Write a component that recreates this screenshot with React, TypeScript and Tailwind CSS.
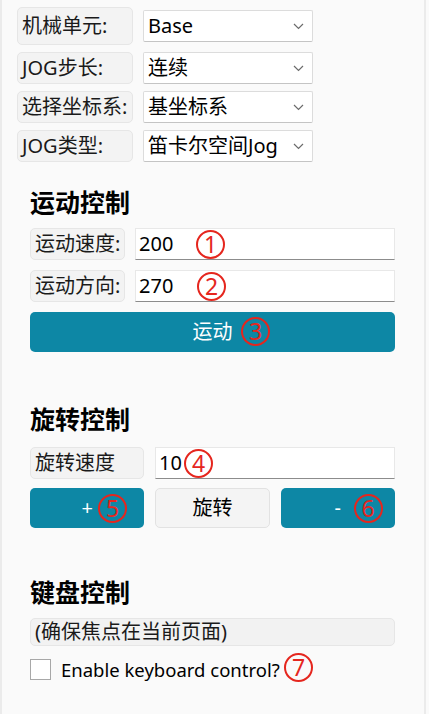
import React from "react";

const font = "font-['Noto_Sans','Noto_Sans_CJK_SC',sans-serif]";

// 红色圆圈序号标注
function Mark({ n, className }: { n: number; className: string }) {
  return (
    <span
      className={`absolute flex h-[29px] w-[29px] items-center justify-center rounded-full border-2 border-[#e5261e] text-[23px] leading-none text-[#e5261e] ${className}`}
    >
      {n}
    </span>
  );
}

function Chevron() {
  return (
    <svg width="11" height="7" viewBox="0 0 11 7" fill="none" className="ml-auto shrink-0">
      <path d="M1 1l4.5 4.5L10 1" stroke="#6b6b6b" strokeWidth="1.2" />
    </svg>
  );
}

const selects = [
  { label: "机械单元:", value: "Base", tall: true },
  { label: "JOG步长:", value: "连续" },
  { label: "选择坐标系:", value: "基坐标系" },
  { label: "JOG类型:", value: "笛卡尔空间Jog" },
];

function Label({ text, w, h = "h-[32px]" }: { text: string; w: string; h?: string }) {
  return (
    <div
      className={`${w} ${h} flex shrink-0 items-center whitespace-nowrap rounded-[5px] border border-[#e6e6e6] bg-[#f3f3f3] pl-[4px] text-[20px] text-[#1a1a1a]`}
    >
      {text}
    </div>
  );
}

function Input({ value, w, mark }: { value: string; w: string; mark: React.ReactNode }) {
  return (
    <div
      className={`relative ${w} flex h-[32px] shrink-0 items-center border border-[#e8e8e8] border-b-[#8c8c8c] bg-white pl-[3px] text-[20px] text-black`}
    >
      {value}
      {mark}
    </div>
  );
}

export default function App() {
  return (
    <div className={`min-h-[714px] w-[429px] bg-[#fafafa] ${font}`}>
      <div className="min-h-[714px] w-[426px] border-l-2 border-r-2 border-[#ebebeb]">
        {/* 顶部下拉选项 */}
        <div className="flex flex-col gap-[7px] pl-[15px] pt-[7px]">
          {selects.map((s) => (
            <div key={s.label} className="flex items-center gap-[10px]">
              <Label text={s.label} w="w-[116px]" h={s.tall ? "h-[38px]" : "h-[32px]"} />
              <div className="flex h-[32px] w-[170px] items-center whitespace-nowrap rounded-[2px] border border-[#dcdcdc] border-b-[#c4c4c4] bg-white pl-[4px] pr-[8px] text-[20px] text-black">
                <span>{s.value}</span>
                <Chevron />
              </div>
            </div>
          ))}
        </div>

        {/* 运动控制 */}
        <div className="mt-[24px] w-[393px] pl-[28px]">
          <div className="h-[32px] text-[25px] font-bold leading-[32px] text-black">运动控制</div>
          <div className="mt-[10px] flex flex-col gap-[10px]">
            <div className="flex items-center gap-[10px]">
              <Label text="运动速度:" w="w-[95px]" />
              <Input value="200" w="w-[260px]" mark={<Mark n={1} className="left-[60px] top-[1px]" />} />
            </div>
            <div className="flex items-center gap-[10px]">
              <Label text="运动方向:" w="w-[95px]" />
              <Input value="270" w="w-[260px]" mark={<Mark n={2} className="left-[61px] top-[1px]" />} />
            </div>
          </div>
          <button className="relative mt-[10px] flex h-[40px] w-[365px] items-center justify-center rounded-[5px] bg-[#0d87a5] text-[20px] text-white">
            运动
            <Mark n={3} className="left-[211px] top-[5px]" />
          </button>
        </div>

        {/* 旋转控制 */}
        <div className="mt-[51px] w-[393px] pl-[28px]">
          <div className="h-[32px] text-[25px] font-bold leading-[32px] text-black">旋转控制</div>
          <div className="mt-[12px] flex items-center gap-[11px]">
            <Label text="旋转速度" w="w-[114px]" />
            <Input value="10" w="w-[240px]" mark={<Mark n={4} className="left-[28px] top-[1px]" />} />
          </div>
          <div className="mt-[9px] grid w-[365px] grid-cols-3 gap-[11px]">
            <button className="relative flex h-[40px] items-center justify-center rounded-[5px] bg-[#0d87a5] text-[20px] text-white">
              +
              <Mark n={5} className="left-[68px] top-[6px]" />
            </button>
            <button className="flex h-[40px] items-center justify-center rounded-[5px] border border-[#e2e2e2] bg-[#f4f4f4] text-[20px] text-black">
              旋转
            </button>
            <button className="relative flex h-[40px] items-center justify-center rounded-[5px] bg-[#0d87a5] text-[20px] text-white">
              -
              <Mark n={6} className="left-[73px] top-[6px]" />
            </button>
          </div>
        </div>

        {/* 键盘控制 */}
        <div className="mt-[48px] w-[393px] pl-[28px]">
          <div className="h-[32px] text-[25px] font-bold leading-[32px] text-black">键盘控制</div>
          <div className="mt-[10px] flex h-[28px] w-[365px] items-center rounded-[5px] border border-[#e6e6e6] bg-[#f2f2f2] pl-[4px] text-[20px] text-[#1a1a1a]">
            (确保焦点在当前页面)
          </div>
          <div className="relative mt-[10px] flex items-center gap-[10px]">
            <span className="h-[21px] w-[21px] border border-[#a8a8a8] bg-white" />
            <span className="text-[18.5px] text-black">Enable keyboard control?</span>
            <Mark n={7} className="left-[254px] top-[-3px] h-[28px] w-[28px]" />
          </div>
        </div>
      </div>
    </div>
  );
}
